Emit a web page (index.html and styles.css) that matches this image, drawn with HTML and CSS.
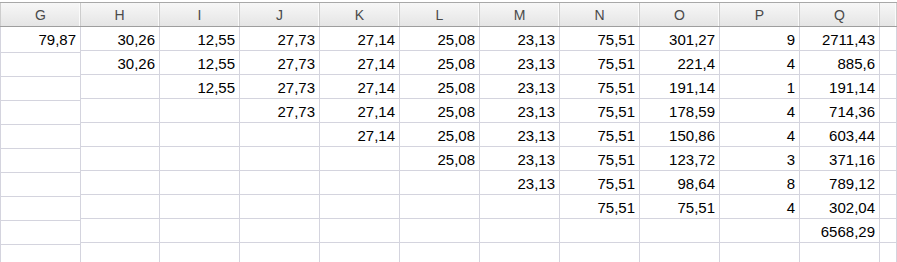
FILE: index.html
```html
<!DOCTYPE html>
<html>
<head>
<meta charset="utf-8">
<link rel="stylesheet" href="styles.css">
</head>
<body>
<div class="sheet">
  <div class="row head">
    <div class="hc">G</div><div class="hc">H</div><div class="hc">I</div><div class="hc">J</div><div class="hc">K</div><div class="hc">L</div><div class="hc">M</div><div class="hc">N</div><div class="hc">O</div><div class="hc">P</div><div class="hc">Q</div><div class="hc"></div>
  </div>
  <div class="row">
    <div class="c">79,87</div><div class="c">30,26</div><div class="c">12,55</div><div class="c">27,73</div><div class="c">27,14</div><div class="c">25,08</div><div class="c">23,13</div><div class="c">75,51</div><div class="c">301,27</div><div class="c">9</div><div class="c">2711,43</div><div class="c"></div>
  </div>
  <div class="row">
    <div class="c"></div><div class="c">30,26</div><div class="c">12,55</div><div class="c">27,73</div><div class="c">27,14</div><div class="c">25,08</div><div class="c">23,13</div><div class="c">75,51</div><div class="c">221,4</div><div class="c">4</div><div class="c">885,6</div><div class="c"></div>
  </div>
  <div class="row">
    <div class="c"></div><div class="c"></div><div class="c">12,55</div><div class="c">27,73</div><div class="c">27,14</div><div class="c">25,08</div><div class="c">23,13</div><div class="c">75,51</div><div class="c">191,14</div><div class="c">1</div><div class="c">191,14</div><div class="c"></div>
  </div>
  <div class="row">
    <div class="c"></div><div class="c"></div><div class="c"></div><div class="c">27,73</div><div class="c">27,14</div><div class="c">25,08</div><div class="c">23,13</div><div class="c">75,51</div><div class="c">178,59</div><div class="c">4</div><div class="c">714,36</div><div class="c"></div>
  </div>
  <div class="row">
    <div class="c"></div><div class="c"></div><div class="c"></div><div class="c"></div><div class="c">27,14</div><div class="c">25,08</div><div class="c">23,13</div><div class="c">75,51</div><div class="c">150,86</div><div class="c">4</div><div class="c">603,44</div><div class="c"></div>
  </div>
  <div class="row">
    <div class="c"></div><div class="c"></div><div class="c"></div><div class="c"></div><div class="c"></div><div class="c">25,08</div><div class="c">23,13</div><div class="c">75,51</div><div class="c">123,72</div><div class="c">3</div><div class="c">371,16</div><div class="c"></div>
  </div>
  <div class="row">
    <div class="c"></div><div class="c"></div><div class="c"></div><div class="c"></div><div class="c"></div><div class="c"></div><div class="c">23,13</div><div class="c">75,51</div><div class="c">98,64</div><div class="c">8</div><div class="c">789,12</div><div class="c"></div>
  </div>
  <div class="row">
    <div class="c"></div><div class="c"></div><div class="c"></div><div class="c"></div><div class="c"></div><div class="c"></div><div class="c"></div><div class="c">75,51</div><div class="c">75,51</div><div class="c">4</div><div class="c">302,04</div><div class="c"></div>
  </div>
  <div class="row">
    <div class="c"></div><div class="c"></div><div class="c"></div><div class="c"></div><div class="c"></div><div class="c"></div><div class="c"></div><div class="c"></div><div class="c"></div><div class="c"></div><div class="c">6568,29</div><div class="c"></div>
  </div>
  <div class="row">
    <div class="c"></div><div class="c"></div><div class="c"></div><div class="c"></div><div class="c"></div><div class="c"></div><div class="c"></div><div class="c"></div><div class="c"></div><div class="c"></div><div class="c"></div><div class="c"></div>
  </div>
</div>
</body>
</html>
```
FILE: styles.css
```css
html, body {
  margin: 0;
  padding: 0;
  background: #ffffff;
  overflow: hidden;
}
body {
  width: 897px;
  height: 262px;
  font-family: "Liberation Sans", Arial, sans-serif;
}
.sheet {
  padding-top: 2px;
  width: 897px;
  height: 260px;
  overflow: hidden;
}
.row {
  display: grid;
  grid-template-columns: 80px repeat(10, 80px) 1fr;
  height: 24px;
}
.row .c:first-child,
.row .hc:first-child {
  border-left: 1px solid #d4d4de;
  width: 79px;
}
.c {
  box-sizing: border-box;
  height: 24px;
  border-right: 1px solid #d4d4de;
  border-bottom: 1px solid #d4d4de;
  font-size: 15px;
  color: #000000;
  text-align: right;
  padding-right: 4px;
  line-height: 23px;
  padding-top: 1px;
  white-space: nowrap;
}
.row .c:first-child {
  box-sizing: content-box;
  width: 75px;
}
.head {
  height: 25px;
  border-top: 1px solid #a8a8a8;
  border-bottom: 1px solid #9e9e9e;
  background: linear-gradient(#f7f7f7, #e5e5e5);
  box-sizing: border-box;
}
.hc {
  box-sizing: border-box;
  height: 23px;
  border-right: 1px solid #cdcdcd;
  box-shadow: inset -1px 0 0 #fbfbfb;
  text-align: center;
  font-size: 14px;
  line-height: 25px;
  color: #4a4a4a;
}
.row .hc:first-child {
  border-left-color: #cdcdcd;
  box-sizing: content-box;
  width: 79px;
}
```
